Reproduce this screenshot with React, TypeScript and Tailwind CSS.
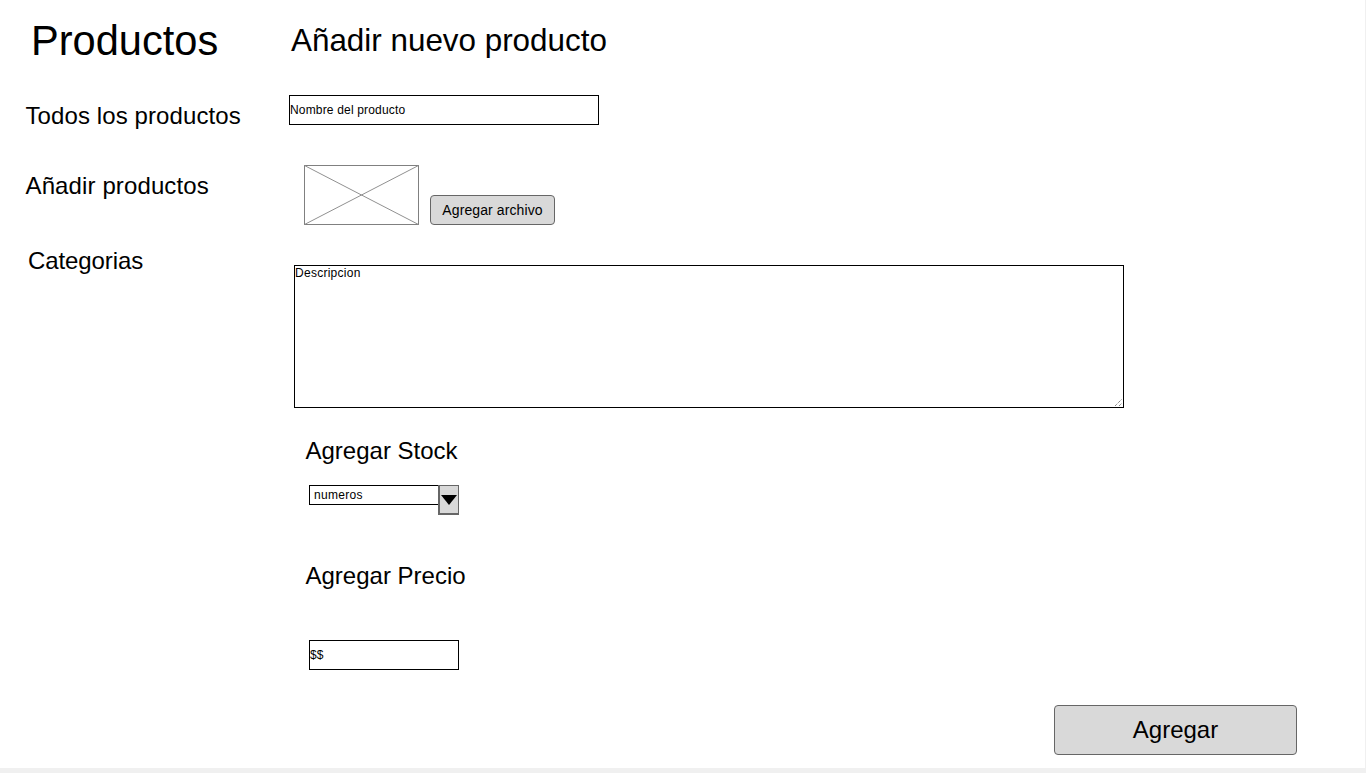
import React from "react";

const font = "font-['Liberation_Sans',Arial,sans-serif]";

const App: React.FC = () => {
  return (
    <div className={`${font} h-[773px] w-[1366px] overflow-hidden bg-[#f0f0f0] text-black`}>
      <div className="flex h-[768px] w-[1365px] bg-white">
        {/* Sidebar */}
        <aside className="w-[289px] shrink-0">
          <h1 className="ml-[31px] mt-[17px] text-[41.6px] leading-[48px]">Productos</h1>
          <nav className="flex flex-col text-[24px] leading-[28px]">
            <a className="ml-[25.5px] mt-[37px] tracking-[0.1px]">Todos los productos</a>
            <a className="ml-[25.5px] mt-[42px] tracking-[0.12px]">Añadir productos</a>
            <a className="ml-[28px] mt-[47px] tracking-[-0.1px]">Categorias</a>
          </nav>
        </aside>

        {/* Form */}
        <main className="flex-1">
          <h2 className="ml-[2px] mt-[23px] text-[31.4px] leading-[36px]">Añadir nuevo producto</h2>

          <div className="mt-[36px] flex h-[30px] w-[310px] items-center border border-black text-[12px] tracking-[0.17px]">
            Nombre del producto
          </div>

          <div className="ml-[15px] mt-[40px] flex items-end gap-[11px]">
            <svg width="115" height="60" viewBox="0 0 115 60" className="block">
              <rect x="0.5" y="0.5" width="114" height="59" fill="#fff" stroke="#808080" />
              <path d="M0.5 0.5 114.5 59.5M114.5 0.5 0.5 59.5" stroke="#909090" fill="none" />
            </svg>
            <button className="flex h-[30px] w-[125px] items-center justify-center rounded-[4px] border border-[#666] bg-[#d9d9d9] text-[14px] tracking-[0.1px]">
              Agregar archivo
            </button>
          </div>

          <div className="relative ml-[5px] mt-[40px] h-[143px] w-[830px] border border-black text-[12px] leading-[14px] tracking-[0.27px]">
            Descripcion
            <svg width="9" height="9" viewBox="0 0 9 9" className="absolute bottom-0 right-0">
              <path d="M1 8 8 1M5 8 8 5" stroke="#555" strokeDasharray="1 1" fill="none" />
            </svg>
          </div>

          <h3 className="ml-[16.5px] mt-[29px] text-[24px] leading-[28px]">Agregar Stock</h3>

          <div className="ml-[20px] mt-[20px] flex h-[30px] w-[150px] items-start">
            <div className="flex h-[20px] w-[130px] items-center border border-black pl-[4px] text-[12px] tracking-[0.3px]">
              numeros
            </div>
            <div className="-ml-px flex h-[30px] w-[21px] items-center justify-center border border-b-2 border-l-2 border-[#666] bg-[#d9d9d9]">
              <svg width="16" height="10" viewBox="0 0 16 10">
                <path d="M0 0H16L8 10Z" fill="#000" />
              </svg>
            </div>
          </div>

          <h3 className="ml-[16.5px] mt-[47px] text-[24px] leading-[28px]">Agregar Precio</h3>

          <div className="ml-[20px] mt-[50px] flex h-[30px] w-[150px] items-center border border-black text-[12px]">
            $$
          </div>

          <div className="ml-[765px] mt-[35px]">
            <button className="h-[50px] w-[243px] rounded-[4px] border border-[#666] bg-[#d9d9d9] text-[24px]">
              Agregar
            </button>
          </div>
        </main>
      </div>
    </div>
  );
};

export default App;
